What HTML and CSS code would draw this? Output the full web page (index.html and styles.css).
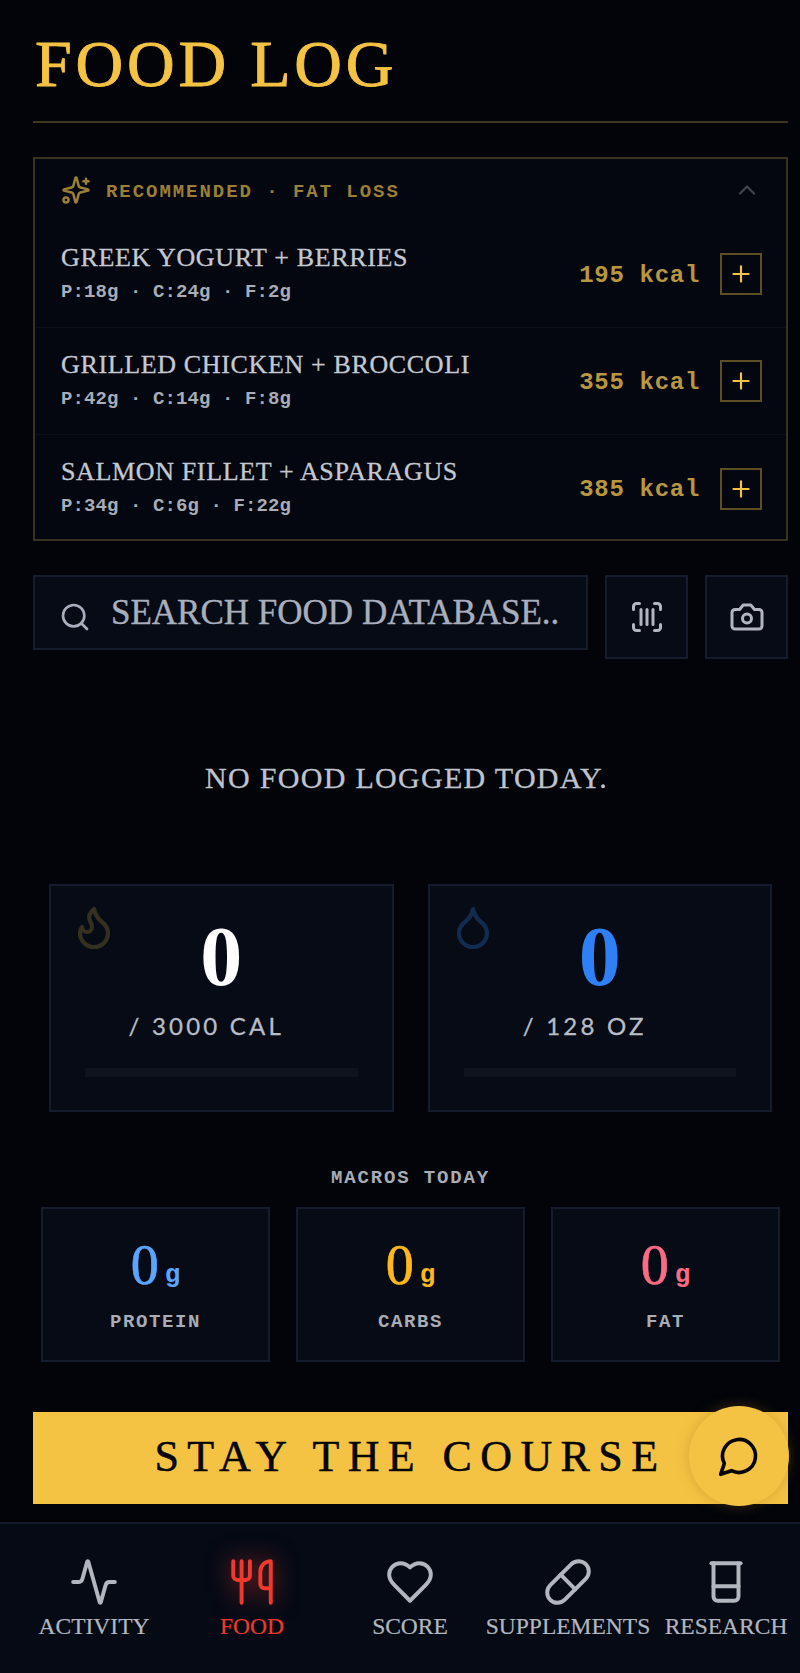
FILE: index.html
```html
<!DOCTYPE html>
<html lang="en">

<head>
    <meta charset="UTF-8">
    <meta name="viewport" content="width=device-width, initial-scale=1.0">
    <title>Food Log</title>
    <link rel="stylesheet" href="styles.css">
</head>

<body>
    <div class="app">
        <main class="page">
            <h1 class="title">FOOD LOG</h1>

            <section class="recommended">
                <div class="rec-head">
                    <svg class="rec-icon" viewBox="0 0 24 24"><path d="M9.937 15.5A2 2 0 0 0 8.5 14.063l-6.135-1.582a.5.5 0 0 1 0-.962L8.5 9.936A2 2 0 0 0 9.937 8.5l1.582-6.135a.5.5 0 0 1 .963 0L14.063 8.5A2 2 0 0 0 15.5 9.937l6.135 1.581a.5.5 0 0 1 0 .964L15.5 14.063a2 2 0 0 0-1.437 1.437l-1.582 6.135a.5.5 0 0 1-.963 0z"/><path d="M20 3v4"/><path d="M22 5h-4"/><circle cx="4" cy="20" r="2"/></svg>
                    <span class="rec-title">RECOMMENDED · FAT LOSS</span>
                    <svg class="rec-toggle" viewBox="0 0 24 24"><path d="m18 15-6-6-6 6"/></svg>
                </div>
                <div class="rec-row">
                    <div class="rec-info">
                        <div class="rec-name">GREEK YOGURT + BERRIES</div>
                        <div class="rec-macros">P:18g · C:24g · F:2g</div>
                    </div>
                    <span class="rec-kcal">195 kcal</span>
                    <button class="rec-add"><svg viewBox="0 0 24 24"><path d="M5 12h14"/><path d="M12 5v14"/></svg></button>
                </div>
                <div class="rec-row">
                    <div class="rec-info">
                        <div class="rec-name">GRILLED CHICKEN + BROCCOLI</div>
                        <div class="rec-macros">P:42g · C:14g · F:8g</div>
                    </div>
                    <span class="rec-kcal">355 kcal</span>
                    <button class="rec-add"><svg viewBox="0 0 24 24"><path d="M5 12h14"/><path d="M12 5v14"/></svg></button>
                </div>
                <div class="rec-row">
                    <div class="rec-info">
                        <div class="rec-name">SALMON FILLET + ASPARAGUS</div>
                        <div class="rec-macros">P:34g · C:6g · F:22g</div>
                    </div>
                    <span class="rec-kcal">385 kcal</span>
                    <button class="rec-add"><svg viewBox="0 0 24 24"><path d="M5 12h14"/><path d="M12 5v14"/></svg></button>
                </div>
            </section>

            <section class="search-row">
                <div class="search-box">
                    <svg class="search-icon" viewBox="0 0 24 24"><circle cx="11" cy="11" r="8"/><path d="m21 21-4.3-4.3"/></svg>
                    <span class="search-text">SEARCH FOOD DATABASE..</span>
                </div>
                <button class="square-btn"><svg viewBox="0 0 24 24"><path d="M3 7V5a2 2 0 0 1 2-2h2"/><path d="M17 3h2a2 2 0 0 1 2 2v2"/><path d="M21 17v2a2 2 0 0 1-2 2h-2"/><path d="M7 21H5a2 2 0 0 1-2-2v-2"/><path d="M8 7v10"/><path d="M12 7v10"/><path d="M16 7v10"/></svg></button>
                <button class="square-btn"><svg viewBox="0 0 24 24"><path d="M14.5 4h-5L7 7H4a2 2 0 0 0-2 2v9a2 2 0 0 0 2 2h16a2 2 0 0 0 2-2V9a2 2 0 0 0-2-2h-3l-2.5-3z"/><circle cx="12" cy="13" r="3"/></svg></button>
            </section>

            <p class="empty">NO FOOD LOGGED TODAY.</p>

            <section class="totals">
                <div class="total-card">
                    <svg class="total-icon flame" viewBox="0 0 24 24"><path d="M8.5 14.5A2.5 2.5 0 0 0 11 12c0-1.38-.5-2-1-3-1.072-2.143-.224-4.054 2-6 .5 2.5 2 4.9 4 6.5 2 1.6 3 3.5 3 5.5a7 7 0 1 1-14 0c0-1.153.433-2.294 1-3a2.5 2.5 0 0 0 2.5 2.5z"/></svg>
                    <div class="total-num">0</div>
                    <div class="total-goal">/ 3000 CAL</div>
                    <div class="total-bar"></div>
                </div>
                <div class="total-card">
                    <svg class="total-icon drop" viewBox="0 0 24 24"><path d="M12 22a7 7 0 0 0 7-7c0-2-1-3.9-3-5.5s-3.5-4-4-6.5c-.5 2.5-2 4.9-4 6.5C6 11.1 5 13 5 15a7 7 0 0 0 7 7z"/></svg>
                    <div class="total-num water">0</div>
                    <div class="total-goal">/ 128 OZ</div>
                    <div class="total-bar"></div>
                </div>
            </section>

            <h2 class="macros-title">MACROS TODAY</h2>
            <section class="macros">
                <div class="macro-card protein">
                    <div class="macro-num">0<span class="macro-unit">g</span></div>
                    <div class="macro-label">PROTEIN</div>
                </div>
                <div class="macro-card carbs">
                    <div class="macro-num">0<span class="macro-unit">g</span></div>
                    <div class="macro-label">CARBS</div>
                </div>
                <div class="macro-card fat">
                    <div class="macro-num">0<span class="macro-unit">g</span></div>
                    <div class="macro-label">FAT</div>
                </div>
            </section>

            <section class="banner">
                <span class="banner-text">STAY THE COURSE</span>
                <button class="chat-fab"><svg viewBox="0 0 24 24"><path d="M7.9 20A9 9 0 1 0 4 16.1L2 22Z"/></svg></button>
            </section>
        </main>

        <nav class="tabbar">
            <a class="tab">
                <svg viewBox="0 0 24 24"><path d="M22 12h-2.48a2 2 0 0 0-1.93 1.46l-2.35 8.36a.25.25 0 0 1-.48 0L9.24 2.18a.25.25 0 0 0-.48 0l-2.35 8.36A2 2 0 0 1 4.49 12H2"/></svg>
                <span>ACTIVITY</span>
            </a>
            <a class="tab active">
                <svg viewBox="0 0 24 24"><path d="M3 2v7c0 1.1.9 2 2 2h4a2 2 0 0 0 2-2V2"/><path d="M7 2v20"/><path d="M21 15V2a5 5 0 0 0-5 5v6c0 1.1.9 2 2 2h3Zm0 0v7"/></svg>
                <span>FOOD</span>
            </a>
            <a class="tab">
                <svg viewBox="0 0 24 24"><path d="M19 14c1.49-1.46 3-3.21 3-5.5A5.5 5.5 0 0 0 16.5 3c-1.76 0-3 .5-4.5 2-1.5-1.5-2.74-2-4.5-2A5.5 5.5 0 0 0 2 8.5c0 2.3 1.5 4.05 3 5.5l7 7Z"/></svg>
                <span>SCORE</span>
            </a>
            <a class="tab">
                <svg viewBox="0 0 24 24"><path d="m10.5 20.5 10-10a4.95 4.95 0 1 0-7-7l-10 10a4.95 4.95 0 1 0 7 7Z"/><path d="m8.5 8.5 7 7"/></svg>
                <span>SUPPLEMENTS</span>
            </a>
            <a class="tab">
                <svg viewBox="0 0 24 24"><path d="M5 3h14"/><path d="M6 3v16a2 2 0 0 0 2 2h8a2 2 0 0 0 2-2V3"/><path d="M6 14h12"/></svg>
                <span>RESEARCH</span>
            </a>
        </nav>
    </div>
</body>

</html>
```

FILE: styles.css
```css
html,
body {
    margin: 0;
    height: 100%;
    overflow: hidden;
    background: #02040a;
}

svg {
    fill: none;
    stroke: currentColor;
    stroke-width: 2;
    stroke-linecap: round;
    stroke-linejoin: round;
    display: block;
}

button {
    padding: 0;
    background: none;
    display: flex;
    align-items: center;
    justify-content: center;
}

.app {
    width: 820px;
    height: 1673px;
    display: flex;
    flex-direction: column;
    font-family: "Liberation Serif", serif;
}

.page {
    flex: 1;
    padding: 0 32px 0 33px;
    box-sizing: border-box;
}

.title {
    margin: 0;
    height: 123px;
    padding: 27px 0 0 2px;
    box-sizing: border-box;
    border-bottom: 2px solid #3f3620;
    font-size: 66px;
    line-height: 74px;
    font-weight: 400;
    letter-spacing: 3.8px;
    color: #f5c344;
    -webkit-text-stroke: 0.9px #f5c344;
}

/* recommended */
.recommended {
    margin-top: 34px;
    height: 384px;
    box-sizing: border-box;
    border: 2px solid #3a3220;
    background: #04070f;
}

.rec-head {
    height: 62px;
    padding: 0 26px;
    display: flex;
    align-items: center;
    color: #9a7f35;
}

.rec-icon {
    width: 30px;
    height: 30px;
    margin-right: 15px;
}

.rec-title {
    margin-top: 3px;
    font-family: "Liberation Mono", monospace;
    font-size: 19px;
    font-weight: 700;
    letter-spacing: 1.95px;
}

.rec-toggle {
    margin-left: auto;
    width: 28px;
    height: 28px;
    color: #3e4350;
    margin-right: -1px;
}

.rec-row {
    height: 107px;
    padding: 0 24px 0 26px;
    box-sizing: border-box;
    display: flex;
    align-items: center;
    border-bottom: 1px solid #0b0f19;
    color: #c5c8d0;
}

.rec-row:last-child {
    border-bottom: none;
}

.rec-info {
    flex: 1;
    margin-top: -3px;
}

.rec-name {
    font-size: 26px;
    line-height: 30px;
    letter-spacing: 0.64px;
    -webkit-text-stroke: 0.3px #c5c8d0;
}

.rec-macros {
    margin-top: 8px;
    font-family: "Liberation Mono", monospace;
    font-size: 19px;
    line-height: 22px;
    font-weight: 700;
    letter-spacing: 0.1px;
    color: #a9acb5;
}

.rec-kcal {
    margin: 2px 20px 0 0;
    font-family: "Liberation Mono", monospace;
    font-size: 24px;
    font-weight: 700;
    letter-spacing: 0.7px;
    color: #b8973f;
}

.rec-add {
    width: 42px;
    height: 42px;
    border: 2px solid #5d4e24;
    color: #f5c344;
}

.rec-add svg {
    width: 26px;
    height: 26px;
}

/* search */
.search-row {
    margin-top: 34px;
    display: flex;
    align-items: flex-start;
    gap: 17px;
}

.search-box {
    flex: 1;
    height: 75px;
    box-sizing: border-box;
    border: 2px solid #141c2e;
    background: #060b16;
    display: flex;
    align-items: center;
    padding-left: 24px;
    color: #a9aebc;
}

.search-icon {
    width: 32px;
    height: 32px;
    margin-top: 8px;
    flex-shrink: 0;
}

.search-text {
    margin-left: 20px;
    font-size: 35px;
    white-space: nowrap;
    -webkit-text-stroke: 0.4px #a9aebc;
}

.square-btn {
    width: 83px;
    height: 84px;
    box-sizing: border-box;
    border: 2px solid #141c2e;
    background: #060b16;
    color: #b3b6bf;
}

.square-btn svg {
    width: 36px;
    height: 36px;
}

.empty {
    margin: 101px 8px 0 0;
    text-align: center;
    font-size: 30px;
    line-height: 36px;
    letter-spacing: 1.3px;
    color: #c0c3cb;
    -webkit-text-stroke: 0.3px #c0c3cb;
}

/* totals */
.totals {
    margin: 0 16px;
    padding-top: 88px;
    display: grid;
    grid-template-columns: 1fr 1fr;
    gap: 34px;
}

.total-card {
    position: relative;
    height: 228px;
    box-sizing: border-box;
    border: 2px solid #141c2e;
    background: #060b16;
    padding: 29px 34px 0;
    text-align: center;
}

.total-icon {
    position: absolute;
    top: 17px;
    width: 48px;
    height: 48px;
    stroke-width: 2.1;
}

.flame {
    left: 19px;
    color: #35301f;
}

.drop {
    left: 19px;
    color: #122b4e;
}

.total-num {
    font-size: 84px;
    line-height: 84px;
    font-weight: 700;
    color: #fff;
}

.water {
    color: #2f80f5;
}

.total-goal {
    margin-top: 13px;
    padding-right: 30px;
    font-family: Lato, sans-serif;
    font-size: 24px;
    line-height: 28px;
    letter-spacing: 3.2px;
    color: #b9bcc4;
    -webkit-text-stroke: 0.3px #b9bcc4;
}

.total-bar {
    margin-top: 28px;
    height: 9px;
    background: #0e131e;
}

/* macros */
.macros-title {
    margin: 0;
    padding-top: 55px;
    text-align: center;
    font-family: "Liberation Mono", monospace;
    font-size: 19px;
    line-height: 22px;
    font-weight: 700;
    letter-spacing: 1.85px;
    color: #a9acb5;
}

.macros {
    margin: 18px 8px 0;
    display: grid;
    grid-template-columns: repeat(3, 1fr);
    gap: 26px;
}

.macro-card {
    height: 155px;
    box-sizing: border-box;
    border: 2px solid #141c2e;
    background: #060b16;
    text-align: center;
    padding-top: 24px;
}

.macro-num {
    font-size: 56px;
    line-height: 64px;
    -webkit-text-stroke: 0.7px currentColor;
}

.macro-unit {
    margin-left: 6px;
    font-family: "Liberation Mono", monospace;
    font-size: 26px;
    line-height: 20px;
    font-weight: 700;
    vertical-align: 2px;
    -webkit-text-stroke: 0;
}

.protein .macro-num {
    color: #5aa5ff;
}

.carbs .macro-num {
    color: #ffb81c;
}

.fat .macro-num {
    color: #fb6b85;
}

.macro-label {
    margin-top: 14px;
    font-family: "Liberation Mono", monospace;
    font-size: 19px;
    font-weight: 700;
    letter-spacing: 1.6px;
    color: #a9acb5;
}

/* banner */
.banner {
    position: relative;
    margin-top: 50px;
    height: 92px;
    padding-bottom: 3px;
    box-sizing: border-box;
    background: #f5c344;
    color: #050505;
    display: flex;
    align-items: center;
    justify-content: center;
}

.banner-text {
    font-size: 44px;
    letter-spacing: 8.4px;
    -webkit-text-stroke: 0.5px #050505;
}

.chat-fab {
    position: absolute;
    right: -1px;
    top: -6px;
    width: 100px;
    height: 100px;
    border: none;
    border-radius: 50%;
    background: #f5c344;
    box-shadow: 0 0 14px rgba(160, 110, 20, 0.35);
    color: #050505;
}

.chat-fab svg {
    width: 44px;
    height: 44px;
}

/* tab bar */
.tabbar {
    height: 151px;
    box-sizing: border-box;
    border-top: 2px solid #141a2a;
    background: #050a15;
    padding: 0 15px;
    display: grid;
    grid-template-columns: repeat(5, minmax(0, 1fr));
}

.tab {
    padding-top: 33px;
    display: flex;
    flex-direction: column;
    align-items: center;
    color: #b3b6bf;
    white-space: nowrap;
}

.tab svg {
    width: 50px;
    height: 50px;
    stroke-width: 1.9;
}

.tab span {
    margin-top: 5px;
    font-size: 23.5px;
    line-height: 28px;
    -webkit-text-stroke: 0.2px currentColor;
}

.tab.active {
    color: #ee3a2e;
}

.tab.active svg {
    filter: drop-shadow(0 0 12px rgba(238, 58, 46, 0.7));
}
```
